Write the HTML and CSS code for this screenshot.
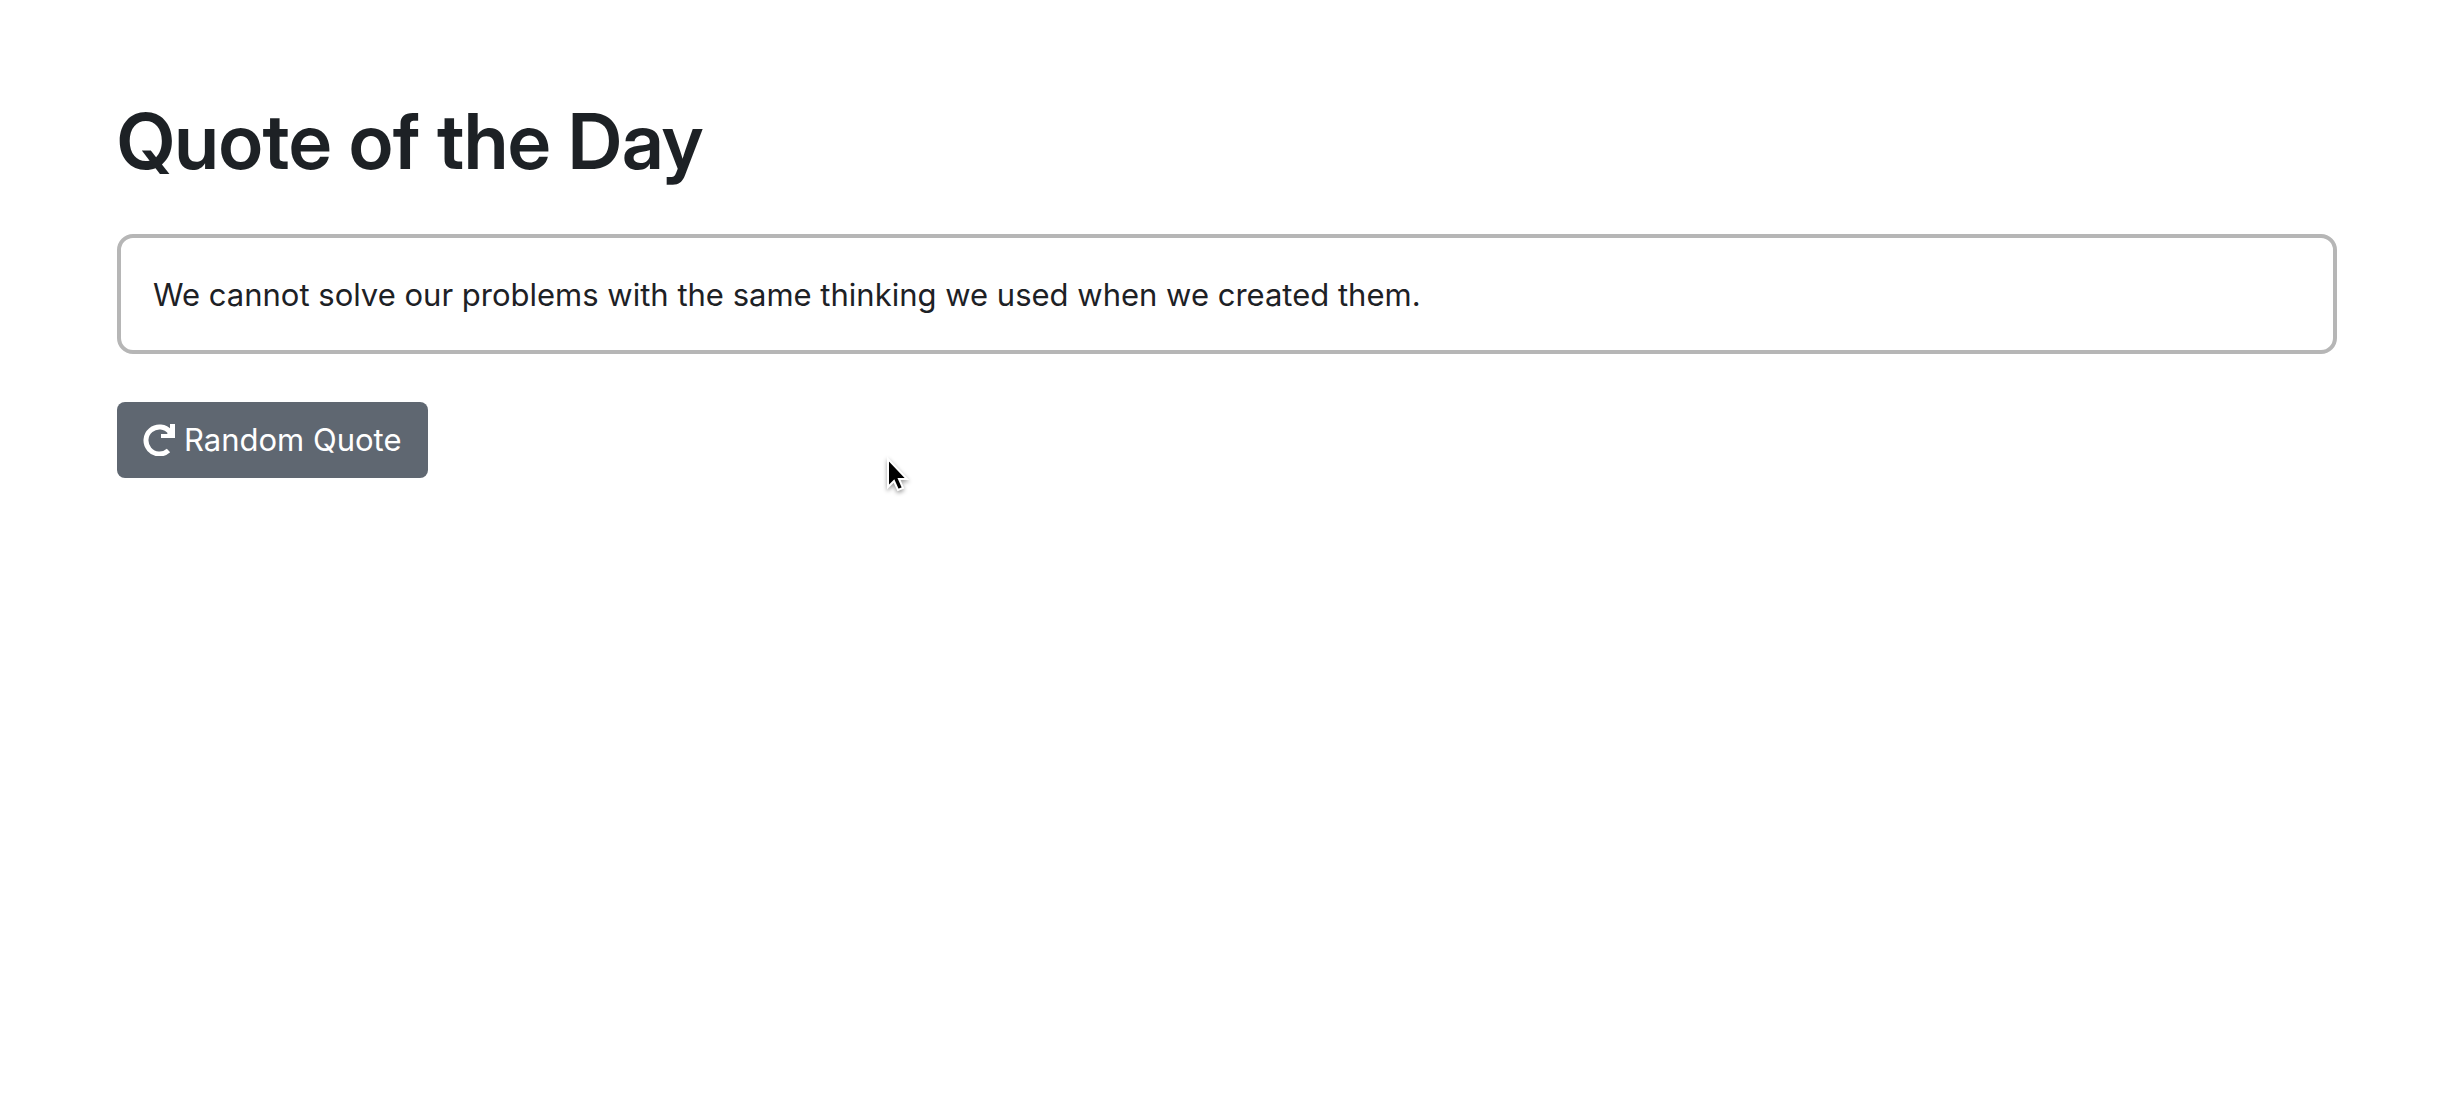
FILE: index.html
```html
<!DOCTYPE html>
<html lang="en">
<head>
<meta charset="utf-8">
<title>Quote of the Day</title>
<link rel="stylesheet" href="styles.css">
</head>
<body>
<main class="page">
<h1 class="title">Quote of the Day</h1>
<blockquote class="quote">We cannot solve our problems with the same thinking we used when we created them.</blockquote>
<button class="button" type="button">
<svg class="icon" viewBox="0 0 32 32" aria-hidden="true"><path d="M25.500 26.500A13.500 13.500 0 1 1 27 8" fill="none" stroke="currentColor" stroke-width="5"/><path d="M27 0h5v14H18v-4h6l3-4z" fill="currentColor"/></svg>
<span>Random Quote</span>
</button>
</main>
<svg class="cursor" viewBox="0 0 28 40" aria-hidden="true"><path d="M5 3v28l6-6 4 9 5-2-4-9h8z" fill="#000" stroke="#fff" stroke-width="2"/></svg>
</body>
</html>
```
FILE: styles.css
```css
body {
  margin: 0;
  background: #fff;
  color: #1d2125;
  font-family: Inter, sans-serif;
  font-size: 31px;
  line-height: 48px;
}
.page {
  padding: 92px 115px 92px 117px;
}
.title {
  margin: 0 0 44px;
  font-family: "Inter Display", Inter, sans-serif;
  font-size: 77px;
  font-weight: 600;
  line-height: 98px;
}
.quote {
  margin: 0 0 48px;
  padding: 33px 32px 31px;
  border: 4px solid #b6b6b6;
  border-radius: 16px;
}
.button {
  display: inline-flex;
  align-items: center;
  gap: 9px;
  padding: 14px 26px;
  border: 0;
  border-radius: 8px;
  background: #5f6771;
  color: #fff;
  font: inherit;
}
.icon {
  width: 32px;
  height: 32px;
}
.cursor {
  position: absolute;
  left: 883px;
  top: 456px;
  width: 28px;
  height: 40px;
  filter: drop-shadow(0 2px 2px rgba(0, 0, 0, 0.4));
}
```
